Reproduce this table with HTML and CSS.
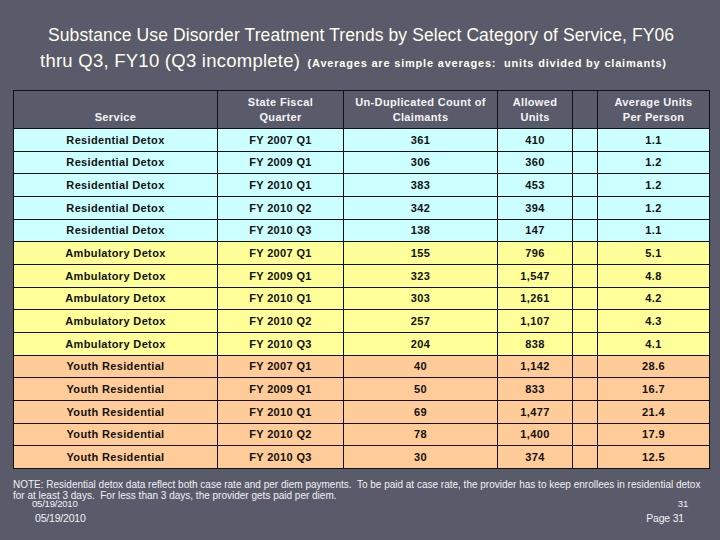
FILE: index.html
```html
<!DOCTYPE html>
<html>
<head>
<meta charset="utf-8">
<link rel="stylesheet" href="styles.css">
</head>
<body>
<div class="slide">
  <h1 class="title">
    <span class="line1">Substance Use Disorder Treatment Trends by Select Category of Service, FY06</span>
    <span class="line2">thru Q3, FY10 (Q3 incomplete) <small class="sub">(Averages are simple averages:&nbsp; units divided by claimants)</small></span>
  </h1>
  <table class="data">
    <colgroup>
      <col class="c1"><col class="c2"><col class="c3"><col class="c4"><col class="c5"><col class="c6">
    </colgroup>
    <thead>
      <tr>
        <th class="bottom">Service</th>
        <th>State Fiscal<br>Quarter</th>
        <th>Un-Duplicated Count of<br>Claimants</th>
        <th>Allowed<br>Units</th>
        <th></th>
        <th>Average Units<br>Per Person</th>
      </tr>
    </thead>
    <tbody>
      <tr class="res"><td>Residential Detox</td><td>FY 2007 Q1</td><td>361</td><td>410</td><td></td><td>1.1</td></tr>
      <tr class="res"><td>Residential Detox</td><td>FY 2009 Q1</td><td>306</td><td>360</td><td></td><td>1.2</td></tr>
      <tr class="res"><td>Residential Detox</td><td>FY 2010 Q1</td><td>383</td><td>453</td><td></td><td>1.2</td></tr>
      <tr class="res"><td>Residential Detox</td><td>FY 2010 Q2</td><td>342</td><td>394</td><td></td><td>1.2</td></tr>
      <tr class="res"><td>Residential Detox</td><td>FY 2010 Q3</td><td>138</td><td>147</td><td></td><td>1.1</td></tr>
      <tr class="amb"><td>Ambulatory Detox</td><td>FY 2007 Q1</td><td>155</td><td>796</td><td></td><td>5.1</td></tr>
      <tr class="amb"><td>Ambulatory Detox</td><td>FY 2009 Q1</td><td>323</td><td>1,547</td><td></td><td>4.8</td></tr>
      <tr class="amb"><td>Ambulatory Detox</td><td>FY 2010 Q1</td><td>303</td><td>1,261</td><td></td><td>4.2</td></tr>
      <tr class="amb"><td>Ambulatory Detox</td><td>FY 2010 Q2</td><td>257</td><td>1,107</td><td></td><td>4.3</td></tr>
      <tr class="amb"><td>Ambulatory Detox</td><td>FY 2010 Q3</td><td>204</td><td>838</td><td></td><td>4.1</td></tr>
      <tr class="youth"><td>Youth Residential</td><td>FY 2007 Q1</td><td>40</td><td>1,142</td><td></td><td>28.6</td></tr>
      <tr class="youth"><td>Youth Residential</td><td>FY 2009 Q1</td><td>50</td><td>833</td><td></td><td>16.7</td></tr>
      <tr class="youth"><td>Youth Residential</td><td>FY 2010 Q1</td><td>69</td><td>1,477</td><td></td><td>21.4</td></tr>
      <tr class="youth"><td>Youth Residential</td><td>FY 2010 Q2</td><td>78</td><td>1,400</td><td></td><td>17.9</td></tr>
      <tr class="youth"><td>Youth Residential</td><td>FY 2010 Q3</td><td>30</td><td>374</td><td></td><td>12.5</td></tr>
    </tbody>
  </table>
  <div class="bottom-area">
    <p class="note">NOTE: Residential detox data reflect both case rate and per diem payments.&nbsp; To be paid at case rate, the provider has to keep enrollees in residential detox for at least 3 days.&nbsp; For less than 3 days, the provider gets paid per diem.</p>
    <div class="overlay-footer">
      <span class="ov-date">05/19/2010</span>
      <span class="ov-num">31</span>
    </div>
    <div class="footer">
      <span class="date">05/19/2010</span>
      <span class="page">Page 31</span>
    </div>
  </div>
</div>
</body>
</html>
```

FILE: styles.css
```css
html, body {
  margin: 0;
  padding: 0;
}
body {
  background: #595a6a;
  width: 720px;
  height: 540px;
  overflow: hidden;
}
.slide {
  position: relative;
  width: 720px;
  height: 540px;
  display: flex;
  flex-direction: column;
}
.title {
  margin: 0;
  padding: 24px 0 0 0;
  height: 66px;
  box-sizing: border-box;
  font-family: "Liberation Sans", Arial, sans-serif;
  font-weight: normal;
  color: #fffff0;
  display: flex;
  flex-direction: column;
  align-items: flex-start;
}
.line1 {
  margin-left: 48px;
  font-size: 17.5px;
  line-height: 22px;
  letter-spacing: 0.1px;
  white-space: nowrap;
}
.line2 {
  margin-left: 40px;
  margin-top: 2px;
  font-size: 18.5px;
  line-height: 26px;
  letter-spacing: 0.25px;
  white-space: nowrap;
}
.sub {
  font-size: 11px;
  font-weight: bold;
  letter-spacing: 0.8px;
  margin-left: 2px;
}
.data {
  margin: 24px 0 0 13px;
  width: 696px;
  border-collapse: collapse;
  table-layout: fixed;
  font-family: "Liberation Sans", Arial, sans-serif;
  font-weight: bold;
  font-size: 11px;
  letter-spacing: 0.35px;
}
.c1 { width: 204px; }
.c2 { width: 126px; }
.c3 { width: 154px; }
.c4 { width: 75px; }
.c5 { width: 25px; }
.c6 { width: 112px; }
.data th, .data td {
  border: 1px solid #111;
  text-align: center;
  padding: 0;
}
.data th {
  height: 34px;
  color: #f4f4f4;
  font-weight: bold;
  line-height: 15px;
  vertical-align: middle;
}
.data th.bottom {
  vertical-align: bottom;
  padding-bottom: 3px;
}
.data td {
  height: 21.67px;
  color: #111;
}
.res td { background: #ccffff; }
.amb td { background: #ffff99; }
.youth td { background: #ffcc99; }
.bottom-area {
  position: relative;
  padding: 10px 0 0 13px;
  font-family: "Liberation Sans", Arial, sans-serif;
  color: #f2f2f2;
}
.note {
  margin: 0;
  width: 690px;
  font-size: 10px;
  line-height: 11px;
  letter-spacing: 0;
}
.overlay-footer {
  position: absolute;
  left: 32px;
  right: 32px;
  top: 29px;
  display: flex;
  justify-content: space-between;
  font-size: 9.6px;
  letter-spacing: -0.25px;
}
.footer {
  display: flex;
  justify-content: space-between;
  padding: 11px 36px 0 22px;
  font-size: 10.5px;
  letter-spacing: -0.2px;
}
```
